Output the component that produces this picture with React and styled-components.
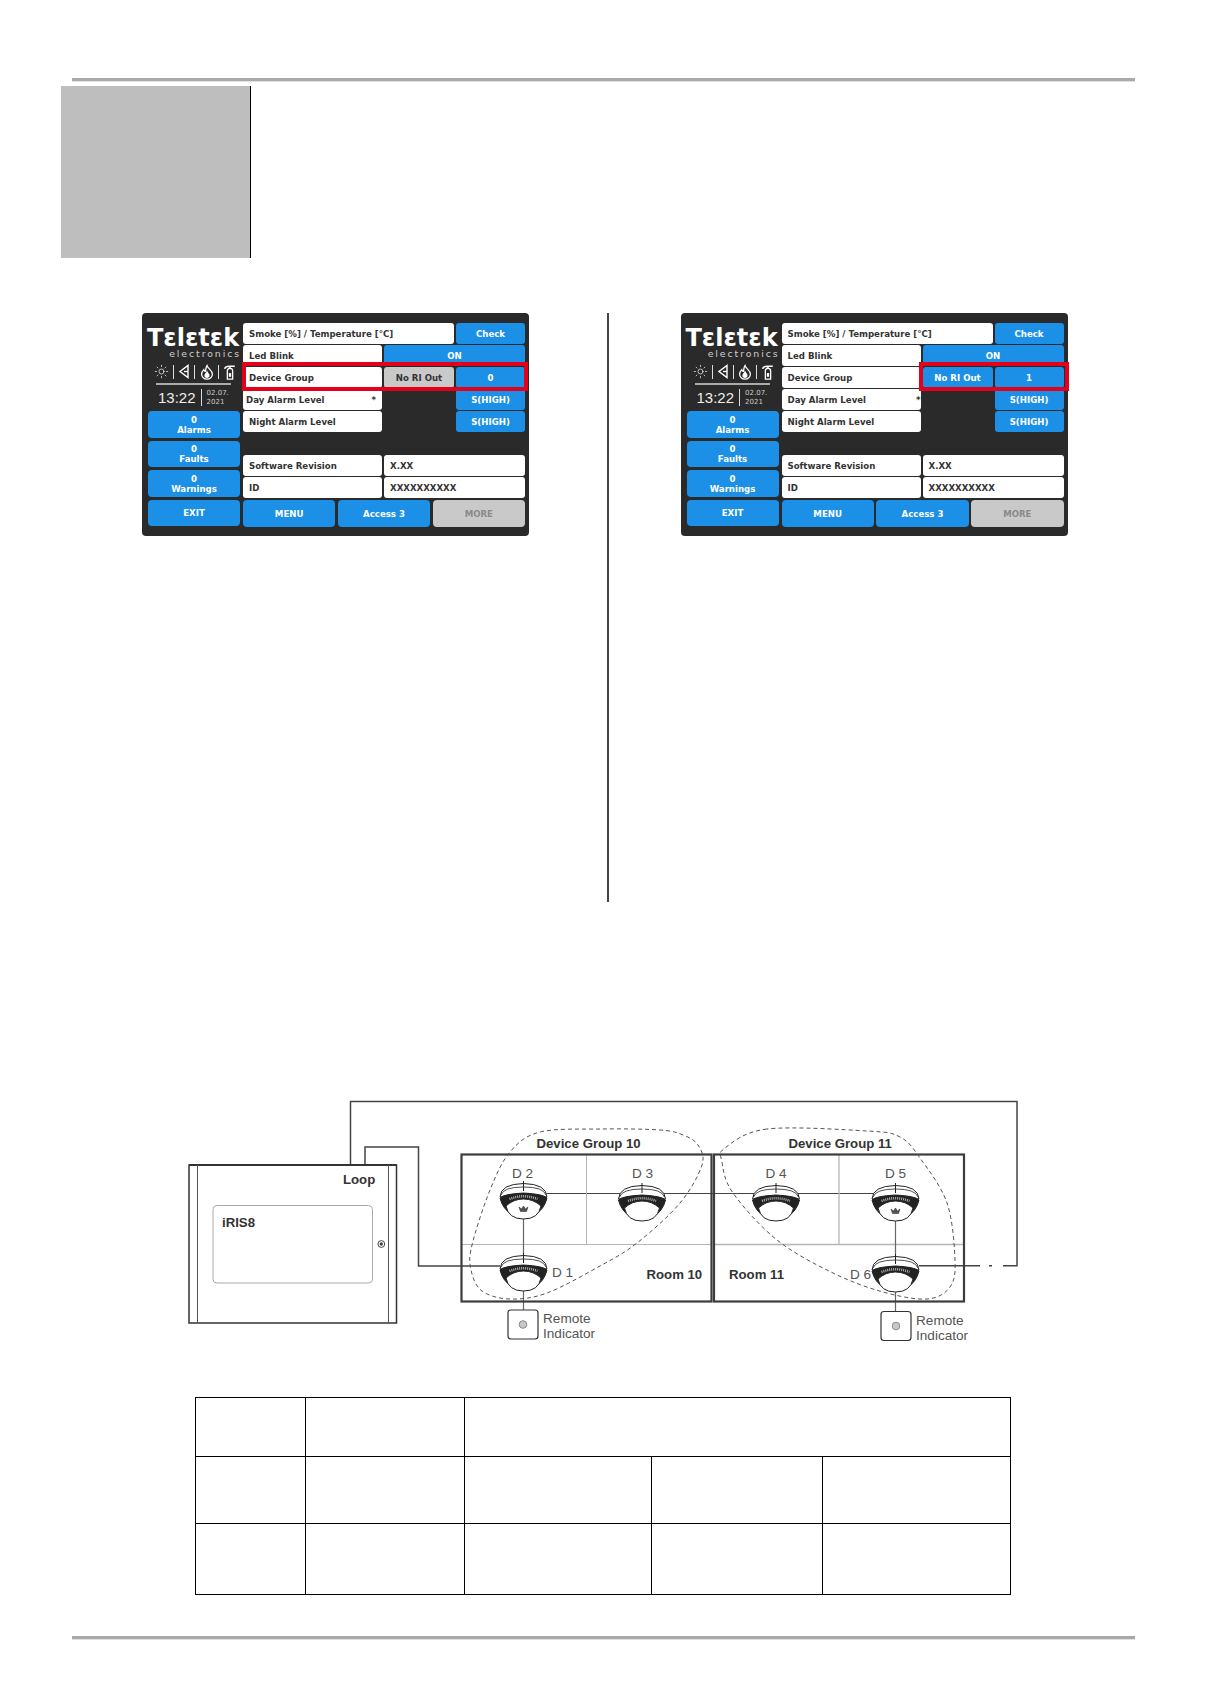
import React from "react";
import styled, { createGlobalStyle } from "styled-components";
import { Sun } from "lucide-react";

const GlobalStyle = createGlobalStyle`
  html, body { margin: 0; padding: 0; background: #fff; }
  body { font-family: "DejaVu Sans", sans-serif; }
`;

const BLUE = "#1c8fe6";

const Page = styled.div`
  width: 1213px;
  height: 1707px;
  overflow: hidden;
  padding-top: 78px;
  box-sizing: border-box;
`;

const Rule = styled.div`
  width: 1063px;
  height: 3px;
  margin-left: 72px;
  background: #a9a9a9;
  border-bottom: 1px solid #e2e2e2;
`;

const GreyBlock = styled.div`
  width: 189px;
  height: 172px;
  margin: 4px 0 0 61px;
  background: #bebebe;
  border-right: 1.5px solid #000;
`;

const Compare = styled.section`
  display: flex;
  align-items: flex-start;
  margin-top: 55px;
  padding-left: 142px;
`;

const Divider = styled.div`
  width: 1.5px;
  height: 589px;
  margin: 0 72px 0 78px;
  background: #444;
`;

/* touch panel */
const Panel = styled.div`
  position: relative;
  flex: none;
  width: 387px;
  height: 223px;
  box-sizing: border-box;
  padding: 10px 6px 9px;
  display: grid;
  grid-template-columns: 92px 282px;
  column-gap: 3px;
  background: #2a2a2a;
  border-radius: 4px;
  font-family: "DejaVu Sans", sans-serif;
  font-weight: 700;
  font-size: 8.6px;
`;

const Side = styled.div`
  display: flex;
  flex-direction: column;
  gap: 3px;
`;

const Brand = styled.div`
  height: 85px;
  padding-top: 4px;
  box-sizing: border-box;
  color: #fff;
  display: flex;
  flex-direction: column;
`;

const Logo = styled.div`
  font-size: 24px;
  line-height: 22px;
  height: 22px;
  margin-left: -1px;
  white-space: nowrap;
`;

const LogoSub = styled.div`
  font-weight: 400;
  font-size: 9.4px;
  line-height: 10px;
  letter-spacing: 1.9px;
  margin-right: -1px;
  text-align: right;
  color: #cfcfcf;
`;

const IconRow = styled.div`
  display: flex;
  align-items: center;
  justify-content: space-between;
  height: 17px;
  padding: 0 3px 0 6px;
  margin-top: 4px;
  color: #fff;
`;

const IconSep = styled.span`
  width: 1px;
  height: 14px;
  background: #ddd;
`;

const TimeRow = styled.div`
  margin: 3px 9px 0 8px;
  padding: 4px 0 0 2px;
  border-top: 2px solid #aaa;
  display: flex;
  align-items: center;
  gap: 5px;
  font-weight: 400;
`;

const Clock = styled.span`
  font-family: "Liberation Sans", sans-serif;
  font-size: 15px;
  line-height: 17px;
  color: #eee;
`;

const DateBox = styled.span`
  border-left: 1px solid #ddd;
  padding-left: 5px;
  font-size: 7px;
  line-height: 8.5px;
  color: #ccc;
`;

const Tile = styled.div`
  height: 26.5px;
  box-sizing: border-box;
  padding-top: 1px;
  border-radius: 4px;
  background: ${(p) => (p.$off ? "#c9c9c9" : BLUE)};
  color: ${(p) => (p.$off ? "#8a8a8a" : "#fff")};
  display: flex;
  align-items: center;
  justify-content: center;
  text-align: center;
  line-height: 10px;
`;

const Main = styled.div`
  display: flex;
  flex-direction: column;
  gap: 3px;
`;

const Rows = styled.div`
  height: 174px;
  display: grid;
  grid-template-columns: 139px 70px 69px;
  grid-auto-rows: 20.7px;
  column-gap: 2px;
  row-gap: 1.3px;
`;

const Cell = styled.div`
  grid-column: ${(p) => p.$span || "auto"};
  grid-row: ${(p) => p.$row || "auto"};
  display: flex;
  align-items: center;
  justify-content: space-between;
  box-sizing: border-box;
  padding: 1px ${(p) => (p.$tightStar ? 0 : 6)}px 0 ${(p) => (p.$indent ? 3 : 6)}px;
  background: #fff;
  color: #333;
  border-radius: 3px;
  white-space: nowrap;
`;

const Action = styled.div`
  grid-column: ${(p) => p.$span || "auto"};
  grid-row: ${(p) => p.$row || "auto"};
  display: flex;
  align-items: center;
  justify-content: center;
  padding-top: 1px;
  background: ${(p) => (p.$off ? "#c9c9c9" : BLUE)};
  color: ${(p) => (p.$off ? "#333" : "#fff")};
  border-radius: 3px;
  white-space: nowrap;
`;

const Footer = styled.div`
  display: grid;
  grid-template-columns: repeat(3, 1fr);
  column-gap: 2.5px;
`;

const RedFrame = styled.div`
  position: absolute;
  top: 48.5px;
  left: ${(p) => p.$left}px;
  width: ${(p) => p.$width}px;
  height: 29.5px;
  box-sizing: border-box;
  border: 4px solid #e2001a;
`;

const Speaker = () => (
  <svg width="12" height="15" viewBox="0 0 12 15" fill="none" stroke="currentColor" strokeWidth="1.4">
    <path d="M10 1.5V13.5L2 7.5Z" />
    <path d="M6 7.5H10" />
  </svg>
);

const Flame = () => (
  <svg width="14" height="16" viewBox="0 0 13 14" fill="none" stroke="currentColor" strokeWidth="1.2">
    <path d="M6.5 1C7 3.5 11.5 5.5 11.5 9A5 4.6 0 0 1 1.5 9C1.5 7 2.5 5.8 3.5 4.8C3.8 6 4.5 6.4 5 6.4C5.4 4.5 5.5 2.5 6.5 1Z" />
    <path d="M6.5 7C7 8.2 8.3 8.8 8.3 10.2A1.8 1.7 0 0 1 4.7 10.2C4.7 8.8 6 8.2 6.5 7Z" fill="currentColor" />
  </svg>
);

const Extinguisher = () => (
  <svg width="14" height="16" viewBox="0 0 13 15" fill="none" stroke="currentColor" strokeWidth="1.2">
    <path d="M4 14.2V6.5Q4 4 6.5 4Q9 4 9 6.5V14.2Z" />
    <path d="M5.4 8.5H7.6V12H5.4Z" fill="currentColor" stroke="none" />
    <path d="M6.5 4V2.2M1.5 4.5Q2 2 6 2H11" strokeWidth="1.4" />
  </svg>
);

const Screen = ({ group, riOn, dayIndent, tightStar, frameLeft, frameWidth }) => (
  <Panel>
    <Side>
      <Brand>
        <Logo>Tεlεtεk</Logo>
        <LogoSub>electronics</LogoSub>
        <IconRow>
          <Sun size={15} strokeWidth={1.1} />
          <IconSep />
          <Speaker />
          <IconSep />
          <Flame />
          <IconSep />
          <Extinguisher />
        </IconRow>
        <TimeRow>
          <Clock>13:22</Clock>
          <DateBox>02.07.<br />2021</DateBox>
        </TimeRow>
      </Brand>
      <Tile>0<br />Alarms</Tile>
      <Tile>0<br />Faults</Tile>
      <Tile>0<br />Warnings</Tile>
      <Tile>EXIT</Tile>
    </Side>
    <Main>
      <Rows>
        <Cell $span="1 / span 2" $row="1">Smoke [%] / Temperature [°C]</Cell>
        <Action $row="1">Check</Action>
        <Cell $row="2">Led Blink</Cell>
        <Action $span="2 / span 2" $row="2">ON</Action>
        <Cell $row="3">Device Group</Cell>
        <Action $off={!riOn} $row="3">No RI Out</Action>
        <Action $row="3">{group}</Action>
        <Cell $row="4" $indent={dayIndent} $tightStar={tightStar}>Day Alarm Level<span>*</span></Cell>
        <Action $span="3" $row="4">S(HIGH)</Action>
        <Cell $row="5">Night Alarm Level</Cell>
        <Action $span="3" $row="5">S(HIGH)</Action>
        <Cell $row="7">Software Revision</Cell>
        <Cell $span="2 / span 2" $row="7">X.XX</Cell>
        <Cell $row="8">ID</Cell>
        <Cell $span="2 / span 2" $row="8">XXXXXXXXXX</Cell>
      </Rows>
      <Footer>
        <Tile>MENU</Tile>
        <Tile>Access 3</Tile>
        <Tile $off>MORE</Tile>
      </Footer>
    </Main>
    <RedFrame $left={frameLeft} $width={frameWidth} />
  </Panel>
);

/* wiring diagram */
const Figure = styled.svg`
  display: block;
  width: 860px;
  height: 270px;
  margin: 188px 0 0 180px;
`;

const Label = styled.text`
  font-family: "Liberation Sans", sans-serif;
  font-size: ${(p) => (p.$bold ? 13.2 : 13.6)}px;
  font-weight: ${(p) => (p.$bold ? 700 : 400)};
  fill: ${(p) => (p.$bold ? "#333" : "#555")};
`;

// closed smooth curve through the given points
const smooth = (pts) => {
  const n = pts.length;
  let d = `M${pts[0][0]} ${pts[0][1]}`;
  for (let i = 0; i < n; i++) {
    const [p0, p1, p2, p3] = [pts[(i - 1 + n) % n], pts[i], pts[(i + 1) % n], pts[(i + 2) % n]];
    const c1 = [p1[0] + (p2[0] - p0[0]) / 6, p1[1] + (p2[1] - p0[1]) / 6];
    const c2 = [p2[0] - (p3[0] - p1[0]) / 6, p2[1] - (p3[1] - p1[1]) / 6];
    d += `C${c1[0]} ${c1[1]} ${c2[0]} ${c2[1]} ${p2[0]} ${p2[1]}`;
  }
  return d + "Z";
};

const group10 = [
  [600, 1129], [540, 1132], [510, 1152], [490, 1190], [472, 1245], [471, 1270], [482, 1291], [510, 1299],
  [547, 1293], [600, 1266], [637, 1243], [680, 1203], [702, 1165], [698, 1145], [683, 1135], [660, 1130],
];

const group11 = [
  [767, 1129], [725, 1148], [722, 1162], [733, 1193], [777, 1240], [833, 1273], [883, 1292], [927, 1299],
  [950, 1287], [955, 1260], [947, 1203], [920, 1158], [900, 1137], [867, 1131],
];

const Detector = ({ x, y, mark }) => (
  <g transform={`translate(${x} ${y})`} stroke="#222" strokeWidth="1">
    <path d="M-23.5 15Q-23 2 0 1.5Q23 2 23.5 15Z" fill="#fff" />
    <path d="M-22.5 13Q-20 5 0 5Q20 5 22.5 13" fill="none" strokeWidth="0.8" />
    <path d="M-23.5 16Q-20 12 0 11Q20 12 23.5 16Q21 27 11 33H-11Q-21 27 -23.5 16Z" fill="#222" />
    <path d="M-14 17Q0 11.5 14 17" fill="none" stroke="#b0b0b0" strokeWidth="2.6" strokeDasharray="1 1" />
    <path d="M-17.5 24Q-10 17 0 17Q10 17 17.5 24Q15 37 0 37Q-15 37 -17.5 24Z" fill="#fff" />
    <path d="M0 -1V9" />
    {mark && <path d="M-4.5 25L-2 27L0 24L2 27L4.5 25L3 29.5H-3Z" fill="#555" strokeWidth="0.5" />}
  </g>
);

const Remote = ({ x, y }) => (
  <g>
    <rect x={x} y={y} width="30" height="29" rx="3" fill="#fff" stroke="#333" strokeWidth="1.2" />
    <circle cx={x + 15} cy={y + 14.5} r="3.8" fill="#c8c8c8" stroke="#888" />
    <Label x={x + 35} y={y + 13}>Remote</Label>
    <Label x={x + 35} y={y + 28}>Indicator</Label>
  </g>
);

const Wiring = () => (
  <Figure viewBox="180 1090 860 270">
    <g fill="none" stroke="#444" strokeWidth="1.5">
      <path d="M350.5 1165V1101.5H1017V1265.7H1003" />
      <path d="M992 1265.7H989M980 1265.7H977" />
      <path d="M365 1165V1147H418.5V1266H500" />
      <path d="M919 1265.7H977" />
      <path d="M546 1193.5H874" strokeWidth="1.2" />
    </g>
    <g fill="none" stroke="#b5b5b5" strokeWidth="1">
      <path d="M461 1244.5H711M586.5 1154V1244" />
      <path d="M714 1244.5H964M839 1154V1244" strokeWidth="1.3" />
    </g>
    <g fill="none" stroke="#666" strokeWidth="1.2">
      <path d="M523.5 1218V1254M523.5 1291V1310" />
      <path d="M895.5 1220V1255M895.5 1292V1312" />
    </g>
    <g fill="none" stroke="#3c3c3c" strokeWidth="2.2">
      <rect x="461.5" y="1154.5" width="250" height="147" />
      <rect x="714" y="1154.5" width="250" height="147" />
    </g>
    <g fill="none" stroke="#555" strokeWidth="1" strokeDasharray="4 3">
      <path d={smooth(group10)} />
      <path d={smooth(group11)} />
    </g>

    <rect x="189" y="1165" width="207.5" height="158" fill="#fff" stroke="#333" strokeWidth="1.5" />
    <path d="M189 1165H396.5" stroke="#333" strokeWidth="2" />
    <path d="M197.5 1165V1323M388.5 1165V1323" stroke="#555" strokeWidth="1" />
    <rect x="213" y="1205.5" width="159.5" height="77.5" rx="4" fill="none" stroke="#aaa" />
    <circle cx="381.3" cy="1244" r="3.4" fill="#fff" stroke="#444" />
    <circle cx="381.3" cy="1244" r="1.7" fill="#444" />
    <Label $bold x="222" y="1227">iRIS8</Label>
    <Label $bold x="343" y="1184">Loop</Label>

    <Detector x={523.5} y={1182} mark />
    <Detector x={523.5} y={1254} />
    <Detector x={642} y={1184} />
    <Detector x={776} y={1184} />
    <Detector x={895.5} y={1184} mark />
    <Detector x={895.5} y={1255} />

    <Label x="512" y="1178">D 2</Label>
    <Label x="552" y="1276.5">D 1</Label>
    <Label x="632" y="1178">D 3</Label>
    <Label x="765.5" y="1178">D 4</Label>
    <Label x="885" y="1178">D 5</Label>
    <Label x="850" y="1279">D 6</Label>
    <Label $bold x="536.5" y="1148">Device Group 10</Label>
    <Label $bold x="788.5" y="1148">Device Group 11</Label>
    <Label $bold x="646.5" y="1279">Room 10</Label>
    <Label $bold x="729" y="1279">Room 11</Label>

    <Remote x={508} y={1310} />
    <Remote x={881} y={1311.5} />
  </Figure>
);

/* empty table */
const Grid = styled.table`
  width: 815px;
  margin: 37px 0 0 195px;
  border-collapse: collapse;
  table-layout: fixed;
`;

const Row = styled.tr`
  height: ${(p) => p.$h}px;
`;

const Box = styled.td`
  padding: 0;
  border: 1.5px solid #000;
  border-right-width: ${(p) => (p.$thin ? 1 : 1.5)}px;
`;

const FootRule = styled(Rule)`
  height: 3px;
  margin-top: 41px;
`;

export default function App() {
  return (
    <Page>
      <GlobalStyle />
      <Rule />
      <GreyBlock />
      <Compare>
        <Screen group="0" dayIndent frameLeft={100} frameWidth={286} />
        <Divider />
        <Screen group="1" riOn tightStar frameLeft={238} frameWidth={150} />
      </Compare>
      <Wiring />
      <Grid>
        <colgroup>
          <col style={{ width: 110 }} />
          <col style={{ width: 159 }} />
          <col style={{ width: 187 }} />
          <col style={{ width: 171 }} />
          <col style={{ width: 188 }} />
        </colgroup>
        <tbody>
          <Row $h={59}><Box /><Box /><Box colSpan={3} /></Row>
          <Row $h={67}><Box /><Box /><Box /><Box $thin /><Box /></Row>
          <Row $h={71}><Box /><Box /><Box /><Box $thin /><Box /></Row>
        </tbody>
      </Grid>
      <FootRule />
    </Page>
  );
}
